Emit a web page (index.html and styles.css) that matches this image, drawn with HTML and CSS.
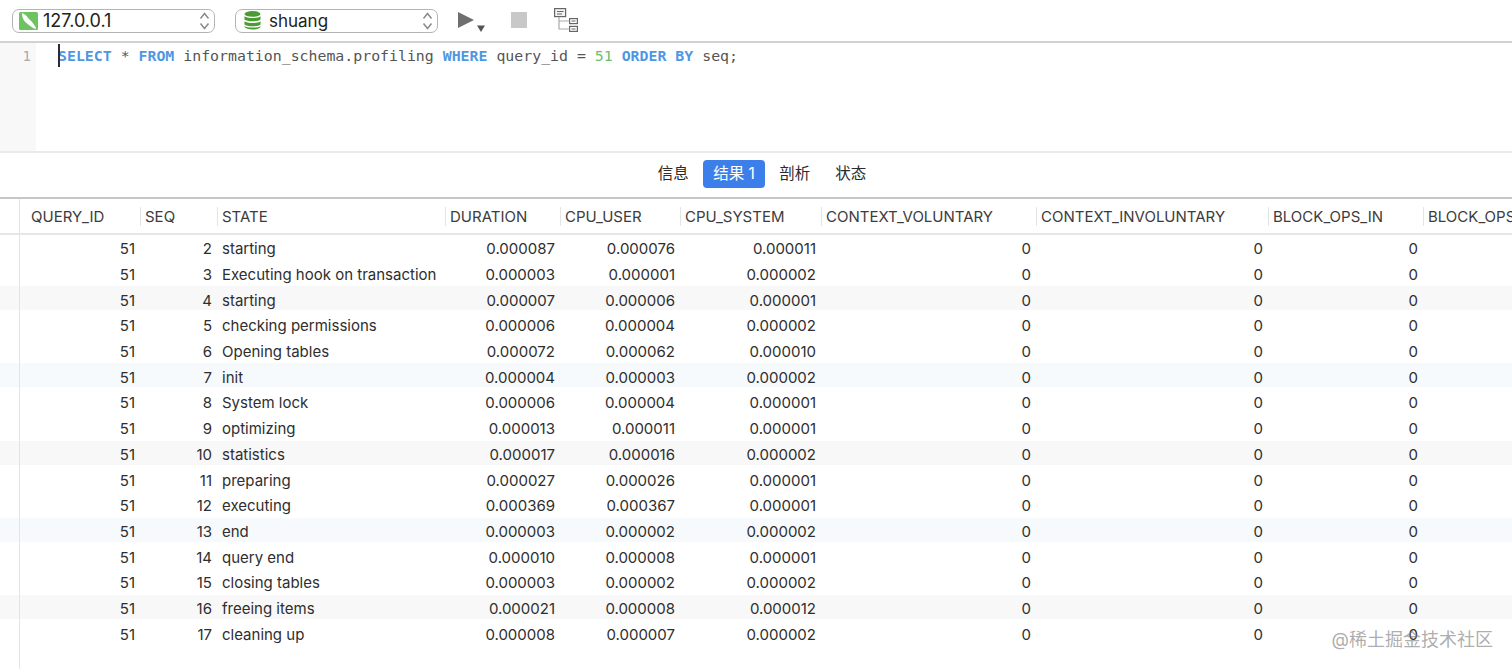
FILE: index.html
```html
<!DOCTYPE html>
<html lang="zh">
<head>
<meta charset="utf-8">
<title>Query</title>
<link rel="stylesheet" href="styles.css">
</head>
<body>
<div class="toolbar">
  <div class="select conn">
    <svg class="sel-icon" width="19" height="18" viewBox="0 0 19 18"><rect width="19" height="18" rx="1.500" fill="#6cc360"/><path d="M3 1 C6 2 8 4 9.500 6.500 C11.500 8.500 14 10 17 16 C17.500 17.500 15 16.800 13.500 15.500 C11 14 9.500 12.500 7.500 11 C5 9 3 6 3 1Z" fill="#fff"/></svg>
    <span class="sel-text">127.0.0.1</span>
    <svg class="updown" width="11" height="20" viewBox="0 0 11 20"><path d="M1.500 7.500 L5.500 2.500 L9.500 7.500 M1.500 12.500 L5.500 17.500 L9.500 12.500" fill="none" stroke="#8a8a8a" stroke-width="1.500"/></svg>
  </div>
  <div class="select db">
    <svg class="sel-icon" width="17" height="19" viewBox="0 0 18 20"><g fill="#4b9b35"><ellipse cx="9" cy="3" rx="8.500" ry="3"/><path d="M0.500 5.500 C3 8 15 8 17.500 5.500 V9 C15 11.500 3 11.500 0.500 9Z"/><path d="M0.500 10.800 C3 13.300 15 13.300 17.500 10.800 V14.300 C15 16.800 3 16.800 0.500 14.300Z"/><path d="M0.500 16 C3 18 15 18 17.500 16 V17 C15 20.500 3 20.500 0.500 17Z"/></g></svg>
    <span class="sel-text">shuang</span>
    <svg class="updown" width="11" height="20" viewBox="0 0 11 20"><path d="M1.500 7.500 L5.500 2.500 L9.500 7.500 M1.500 12.500 L5.500 17.500 L9.500 12.500" fill="none" stroke="#8a8a8a" stroke-width="1.500"/></svg>
  </div>
  <svg class="run" width="28" height="20" viewBox="0 0 28 20"><path d="M0 0 L16 8 L0 16Z" fill="#6f6f6f"/><path d="M19 13.600 H27 L23 20Z" fill="#555"/></svg>
  <div class="stop"></div>
  <svg class="explain" width="24" height="24" viewBox="0 0 24 24"><g fill="none" stroke="#666" stroke-width="1.200"><rect x="0.600" y="0.600" width="11" height="8" fill="#f4f4f4"/><path d="M3 3.500 H9.500 M3 6 H8"/><rect x="15.600" y="10.600" width="7.800" height="5"/><rect x="15.600" y="18.400" width="7.800" height="5"/><path d="M17.500 13 H21.500 M17.500 21 H21.500"/></g><path d="M5 9 V21 H15.500 M5 13 H15.500" fill="none" stroke="#aaa" stroke-width="1.200"/></svg>
</div>
<div class="editor">
  <div class="line-gutter">1</div>
  <div class="code"><span class="caret"></span><span class="kw">SELECT</span> * <span class="kw">FROM</span> information_schema.profiling <span class="kw">WHERE</span> query_id = <span class="num">51</span> <span class="kw">ORDER BY</span> seq;</div>
</div>
<div class="tabs">
  <span class="tab">信息</span>
  <span class="tab active">结果 1</span>
  <span class="tab">剖析</span>
  <span class="tab">状态</span>
</div>
<div class="results">
  <div class="row head">
    <div class="c g"></div>
    <div class="c">QUERY_ID</div><div class="c">SEQ</div><div class="c">STATE</div><div class="c">DURATION</div><div class="c">CPU_USER</div><div class="c">CPU_SYSTEM</div><div class="c">CONTEXT_VOLUNTARY</div><div class="c">CONTEXT_INVOLUNTARY</div><div class="c">BLOCK_OPS_IN</div><div class="c">BLOCK_OPS_OUT</div>
  </div>
  <div class="body" id="rows">
    <div class="row"><div class="c g"></div><div class="c r">51</div><div class="c r">2</div><div class="c">starting</div><div class="c r">0.000087</div><div class="c r">0.000076</div><div class="c r">0.000011</div><div class="c r">0</div><div class="c r">0</div><div class="c r">0</div><div class="c"></div></div>
    <div class="row"><div class="c g"></div><div class="c r">51</div><div class="c r">3</div><div class="c">Executing hook on transaction</div><div class="c r">0.000003</div><div class="c r">0.000001</div><div class="c r">0.000002</div><div class="c r">0</div><div class="c r">0</div><div class="c r">0</div><div class="c"></div></div>
    <div class="row s"><div class="c g"></div><div class="c r">51</div><div class="c r">4</div><div class="c">starting</div><div class="c r">0.000007</div><div class="c r">0.000006</div><div class="c r">0.000001</div><div class="c r">0</div><div class="c r">0</div><div class="c r">0</div><div class="c"></div></div>
    <div class="row"><div class="c g"></div><div class="c r">51</div><div class="c r">5</div><div class="c">checking permissions</div><div class="c r">0.000006</div><div class="c r">0.000004</div><div class="c r">0.000002</div><div class="c r">0</div><div class="c r">0</div><div class="c r">0</div><div class="c"></div></div>
    <div class="row"><div class="c g"></div><div class="c r">51</div><div class="c r">6</div><div class="c">Opening tables</div><div class="c r">0.000072</div><div class="c r">0.000062</div><div class="c r">0.000010</div><div class="c r">0</div><div class="c r">0</div><div class="c r">0</div><div class="c"></div></div>
    <div class="row b"><div class="c g"></div><div class="c r">51</div><div class="c r">7</div><div class="c">init</div><div class="c r">0.000004</div><div class="c r">0.000003</div><div class="c r">0.000002</div><div class="c r">0</div><div class="c r">0</div><div class="c r">0</div><div class="c"></div></div>
    <div class="row"><div class="c g"></div><div class="c r">51</div><div class="c r">8</div><div class="c">System lock</div><div class="c r">0.000006</div><div class="c r">0.000004</div><div class="c r">0.000001</div><div class="c r">0</div><div class="c r">0</div><div class="c r">0</div><div class="c"></div></div>
    <div class="row"><div class="c g"></div><div class="c r">51</div><div class="c r">9</div><div class="c">optimizing</div><div class="c r">0.000013</div><div class="c r">0.000011</div><div class="c r">0.000001</div><div class="c r">0</div><div class="c r">0</div><div class="c r">0</div><div class="c"></div></div>
    <div class="row s"><div class="c g"></div><div class="c r">51</div><div class="c r">10</div><div class="c">statistics</div><div class="c r">0.000017</div><div class="c r">0.000016</div><div class="c r">0.000002</div><div class="c r">0</div><div class="c r">0</div><div class="c r">0</div><div class="c"></div></div>
    <div class="row"><div class="c g"></div><div class="c r">51</div><div class="c r">11</div><div class="c">preparing</div><div class="c r">0.000027</div><div class="c r">0.000026</div><div class="c r">0.000001</div><div class="c r">0</div><div class="c r">0</div><div class="c r">0</div><div class="c"></div></div>
    <div class="row"><div class="c g"></div><div class="c r">51</div><div class="c r">12</div><div class="c">executing</div><div class="c r">0.000369</div><div class="c r">0.000367</div><div class="c r">0.000001</div><div class="c r">0</div><div class="c r">0</div><div class="c r">0</div><div class="c"></div></div>
    <div class="row b"><div class="c g"></div><div class="c r">51</div><div class="c r">13</div><div class="c">end</div><div class="c r">0.000003</div><div class="c r">0.000002</div><div class="c r">0.000002</div><div class="c r">0</div><div class="c r">0</div><div class="c r">0</div><div class="c"></div></div>
    <div class="row"><div class="c g"></div><div class="c r">51</div><div class="c r">14</div><div class="c">query end</div><div class="c r">0.000010</div><div class="c r">0.000008</div><div class="c r">0.000001</div><div class="c r">0</div><div class="c r">0</div><div class="c r">0</div><div class="c"></div></div>
    <div class="row"><div class="c g"></div><div class="c r">51</div><div class="c r">15</div><div class="c">closing tables</div><div class="c r">0.000003</div><div class="c r">0.000002</div><div class="c r">0.000002</div><div class="c r">0</div><div class="c r">0</div><div class="c r">0</div><div class="c"></div></div>
    <div class="row s"><div class="c g"></div><div class="c r">51</div><div class="c r">16</div><div class="c">freeing items</div><div class="c r">0.000021</div><div class="c r">0.000008</div><div class="c r">0.000012</div><div class="c r">0</div><div class="c r">0</div><div class="c r">0</div><div class="c"></div></div>
    <div class="row"><div class="c g"></div><div class="c r">51</div><div class="c r">17</div><div class="c">cleaning up</div><div class="c r">0.000008</div><div class="c r">0.000007</div><div class="c r">0.000002</div><div class="c r">0</div><div class="c r">0</div><div class="c r">0</div><div class="c"></div></div>
  </div>
  <div class="watermark">@稀土掘金技术社区</div>
</div>
</body>
</html>
```
FILE: styles.css
```css
* { box-sizing: border-box; }
html, body { margin: 0; height: 100%; overflow: hidden; background: #fff; }
body {
  width: 1512px;
  height: 669px;
  font-family: Inter, "Noto Sans CJK SC", sans-serif;
  color: #2b2b2b;
}
.toolbar {
  height: 43px;
  display: flex;
  align-items: center;
  padding: 0 0 0 12px;
  border-bottom: 2px solid #d2d2d2;
  background: #fff;
}
.select {
  height: 24px;
  border: 1px solid #b4b4b4;
  border-radius: 7px;
  display: flex;
  align-items: center;
  position: relative;
  background: #fff;
}
.conn { width: 203px; }
.db { width: 203px; margin-left: 20px; }
.sel-text {
  font-size: 17px;
  color: #222;
  line-height: 1;
  margin-top: 1px;
}
.conn .sel-text { font-size: 18px; }
.conn .sel-icon { margin-left: 6px; margin-right: 5px; }
.db .sel-icon { margin-left: 8px; margin-right: 8px; }
.updown { position: absolute; right: 4px; top: 1px; }
.run { margin-left: 20px; margin-top: 3px; }
.stop {
  width: 16px;
  height: 16px;
  margin-left: 25px;
  margin-top: -1px;
  background: #c8c8c8;
}
.explain { margin-left: 27px; margin-top: -1px; }

.editor {
  height: 108px;
  display: flex;
  background: #fff;
}
.line-gutter {
  width: 36px;
  background: #f8f8f8;
  color: #aaa;
  font-family: "DejaVu Sans Mono", monospace;
  font-size: 14px;
  padding: 4px 5px 0 0;
  text-align: right;
  line-height: 18px;
}
.code {
  position: relative;
  padding: 3px 0 0 22px;
  font-family: "DejaVu Sans Mono", monospace;
  font-size: 14.86px;
  line-height: 20px;
  color: #555;
  white-space: pre;
}
.caret {
  position: absolute;
  left: 22px;
  top: 1px;
  width: 2px;
  height: 23px;
  background: #2a2a3a;
}
.kw { color: #4f97e3; font-weight: 700; }
.num { color: #6cbf6c; }

.tabs {
  height: 48px;
  border-top: 2px solid #eaeaea;
  border-bottom: 2px solid #c6c6c6;
  display: flex;
  justify-content: center;
  align-items: center;
  padding: 0 0 3px 12px;
}
.tab {
  font-size: 15.5px;
  line-height: 28px;
  height: 28px;
  padding: 0 12.5px;
  color: #2b2b2b;
}
.tab.active {
  background: #3d7fea;
  color: #fff;
  border-radius: 4px;
  padding: 0 10px;
  margin: 0 2px;
}

.results {
  position: relative;
  height: 470px;
  overflow: hidden;
}
.results::before {
  content: "";
  position: absolute;
  left: 19px;
  top: 0;
  bottom: 0;
  width: 1px;
  background: #e4e4e4;
  z-index: 1;
}
.row {
  display: grid;
  grid-template-columns: 20px 120px 77px 228px 115px 120px 141px 215px 232px 155px 120px;
  height: 25.7px;
  padding-top: 2px;
  align-items: center;
  font-size: 15px;
  color: #2e2e2e;
  white-space: nowrap;
}
.row.head {
  height: 36px;
  padding-top: 0;
  border-bottom: 2px solid #e6e6e6;
  color: #3c3c3c;
}
.row.head .c {
  height: 19px;
  line-height: 19px;
  padding-left: 4px;
  border-left: 1px solid #e4e4e4;
  overflow: hidden;
}
.row.head .c.g { border-left: 0; }
.row.head .c:nth-child(2) { border-left: 0; padding-left: 11px; }
.c { padding-left: 5px; min-width: 0; }
.c.r { text-align: right; padding: 0 5px 0 0; }
.row.s { background: linear-gradient(#f8f8f8, #f8f8f8) top / 100% 24px no-repeat; }
.row.b { background: linear-gradient(#f6fafd, #f6fafd) top / 100% 24px no-repeat; }
.watermark {
  position: absolute;
  right: 19px;
  top: 431px;
  font-size: 18px;
  line-height: 20px;
  color: rgba(120, 120, 120, 0.62);
}
```
